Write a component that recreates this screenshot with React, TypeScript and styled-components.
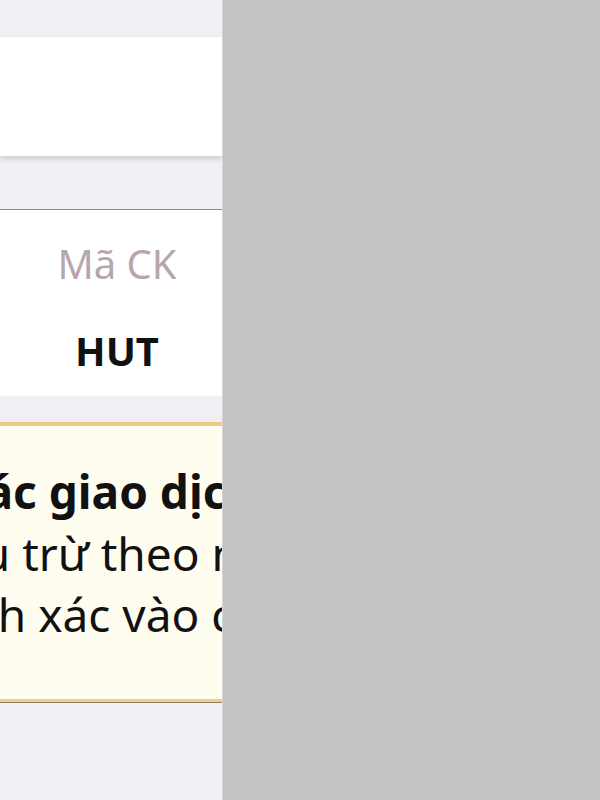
import React from 'react';
import styled, { createGlobalStyle } from 'styled-components';

const GlobalStyle = createGlobalStyle`
  html, body {
    margin: 0;
    padding: 0;
  }
  body {
    font-family: "Noto Sans", "Open Sans", sans-serif;
  }
`;

const Screen = styled.div`
  display: flex;
  width: 600px;
  height: 800px;
  overflow: hidden;
`;

const Page = styled.div`
  width: 222px;
  height: 100%;
  overflow: hidden;
  background-color: #efeff4;
  display: flex;
  flex-direction: column;
  border-right: 1px solid #d6d6d8;
`;

const Backdrop = styled.div`
  flex: 1;
  background-color: #c3c3c3;
`;

const SearchCard = styled.div`
  margin-top: 37px;
  height: 119px;
  background-color: #ffffff;
  box-shadow: 0 3px 5px rgba(0, 0, 0, 0.14);
`;

const Table = styled.div`
  margin-top: 53px;
  height: 186px;
  background-color: #ffffff;
  border-top: 1px solid #8e8e90;
  display: flex;
  justify-content: flex-end;
  padding-right: 5px;
`;

const Column = styled.div`
  width: 200px;
  display: flex;
  flex-direction: column;
  align-items: center;
  padding-top: 26px;
`;

const HeaderCell = styled.div`
  font-size: 40px;
  line-height: 56px;
  color: #b6a6ad;
`;

const ValueCell = styled.div`
  margin-top: 31px;
  font-size: 40px;
  line-height: 56px;
  font-weight: 700;
  color: #111111;
`;

const Notice = styled.div`
  margin-top: 26px;
  background-color: #fffdf0;
  border-top: 4px solid #ecca86;
  border-bottom: 3px solid #e9cf91;
  box-shadow: 0 1px 0 #8f7d5c;
  padding: 35px 0 53px;
`;

const Line = styled.div<{ $shift: number; $bold?: boolean }>`
  white-space: nowrap;
  margin-left: ${(p) => p.$shift}px;
  font-size: 46px;
  line-height: 61.5px;
  font-weight: ${(p) => (p.$bold ? 700 : 400)};
  color: #111111;
`;

const App: React.FC = () => {
  return (
    <>
      <GlobalStyle />
      <Screen>
        <Page>
          <SearchCard />
          <Table>
            <Column>
              <HeaderCell>Mã CK</HeaderCell>
              <ValueCell>HUT</ValueCell>
            </Column>
          </Table>
          <Notice>
            <Line $shift={-44} $bold>
              Các giao dịch đã thực hiện
            </Line>
            <Line $shift={-97}>khấu trừ theo ngày giao dịch</Line>
            <Line $shift={-93}>chính xác vào cuối ngày</Line>
          </Notice>
        </Page>
        <Backdrop />
      </Screen>
    </>
  );
};

export default App;
